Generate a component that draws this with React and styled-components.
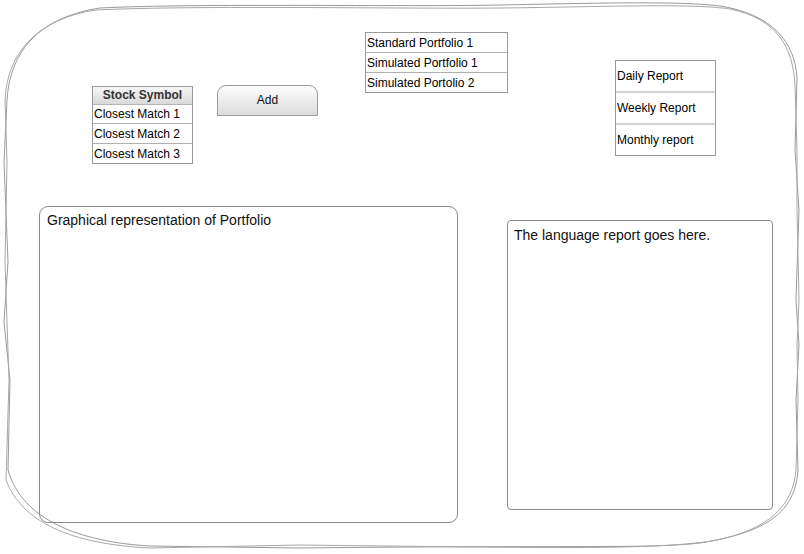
import React from "react";
import styled, { createGlobalStyle } from "styled-components";

const Global = createGlobalStyle`
  html, body { margin: 0; padding: 0; background: #fff; }
  body { font-family: Arial, "Liberation Sans", Helvetica, sans-serif; color: #000; }
`;

const Page = styled.div`
  position: relative;
  width: 804px;
  height: 554px;
  overflow: hidden;
  background: #fff;
  box-sizing: border-box;
  padding-top: 32px;
  display: flex;
  flex-direction: column;
`;

const Frame = styled.svg`
  position: absolute;
  left: 0;
  top: 0;
  width: 804px;
  height: 554px;
  pointer-events: none;
`;

const TopRow = styled.div`
  height: 174px;
  display: flex;
  align-items: flex-start;
`;

const BottomRow = styled.div`
  display: flex;
  align-items: flex-start;
`;

const ListBox = styled.div`
  margin-left: ${(p) => p.$left}px;
  margin-top: ${(p) => p.$top}px;
  width: ${(p) => p.$w}px;
  flex: none;
  border: 1px solid #9a9a9a;
  box-sizing: border-box;
  display: flex;
  flex-direction: column;
  font-size: 12px;
  background: #fff;
`;

const HeaderCell = styled.div`
  height: 17px;
  line-height: 17px;
  text-align: center;
  font-weight: bold;
  color: #333;
  background: linear-gradient(#f6f6f6, #d9d9d9);
  border-bottom: 1px solid #b5b5b5;
`;

const Cell = styled.div`
  height: ${(p) => p.$h}px;
  padding-left: 1px;
  white-space: nowrap;
  box-sizing: border-box;
  display: flex;
  align-items: center;
  border-top: ${(p) => (p.$first ? "none" : p.$thick ? "2px solid #d2d2d2" : "1px solid #b0b0b0")};
`;

const AddButton = styled.button`
  margin: 53px 0 0 24px;
  width: 101px;
  height: 31px;
  flex: none;
  border: 1px solid #9a9a9a;
  border-radius: 9px 9px 0 0;
  background: linear-gradient(#fdfdfd, #dcdcdc);
  font-family: Arial, "Liberation Sans", sans-serif;
  font-size: 12px;
  color: #111;
  padding: 0 0 2px;
  box-sizing: border-box;
`;

const Panel = styled.div`
  margin-left: ${(p) => p.$left}px;
  margin-top: ${(p) => p.$top}px;
  width: ${(p) => p.$w}px;
  height: ${(p) => p.$h}px;
  flex: none;
  border: 1px solid #8c8c8c;
  border-radius: ${(p) => p.$r}px;
  box-sizing: border-box;
  padding: ${(p) => p.$pad};
  font-size: 14px;
  color: #111;
`;

export default function App() {
  return (
    <>
      <Global />
      <Page>
        <Frame viewBox="0 0 804 554">
          <path
            d="M 100 8 C 200 3, 400 7, 500 5 C 600 3, 680 1, 720 6 C 772 14, 795 42, 797 78 L 795 150 L 799 210 L 796 300 L 799 345 L 796 400 L 798 470 C 795 512, 768 532, 700 543 C 650 549, 550 545, 300 548 L 150 546 C 80 542, 22 520, 8 470 L 10 380 L 4 322 L 8 262 L 4 162 L 7 100 C 10 50, 40 17, 100 8 Z"
            fill="none"
            stroke="#9a9a9a"
            strokeWidth="1"
          />
          <path
            d="M 96 10 C 200 5, 400 9, 500 8 C 600 7, 690 3, 730 9 C 778 19, 793 48, 795 85 L 797 150 L 797 210 L 799 300 L 797 345 L 798 400 L 796 470 C 793 505, 770 530, 712 541 C 650 550, 560 548, 300 545 L 150 548 C 70 544, 22 522, 6 480 L 9 380 L 7 322 L 5 262 L 7 162 L 5 100 C 7 55, 35 19, 96 10 Z"
            fill="none"
            stroke="#a8a8a8"
            strokeWidth="1"
          />
        </Frame>
        <TopRow>
          <ListBox $left={92} $top={54} $w={101}>
            <HeaderCell>Stock Symbol</HeaderCell>
            <Cell $h={18} $first>Closest Match 1</Cell>
            <Cell $h={20}>Closest Match 2</Cell>
            <Cell $h={20}>Closest Match 3</Cell>
          </ListBox>
          <AddButton>Add</AddButton>
          <ListBox $left={47} $top={0} $w={143}>
            <Cell $h={19} $first>Standard Portfolio 1</Cell>
            <Cell $h={20}>Simulated Portfolio 1</Cell>
            <Cell $h={20}>Simulated Portolio 2</Cell>
          </ListBox>
          <ListBox $left={107} $top={28} $w={101}>
            <Cell $h={30} $first>Daily Report</Cell>
            <Cell $h={32} $thick>Weekly Report</Cell>
            <Cell $h={32} $thick>Monthly report</Cell>
          </ListBox>
        </TopRow>
        <BottomRow>
          <Panel $left={39} $top={0} $w={419} $h={317} $r={9} $pad="5px 7px">
            Graphical representation of Portfolio
          </Panel>
          <Panel $left={49} $top={14} $w={266} $h={290} $r={4} $pad="6px 6px">
            The language report goes here.
          </Panel>
        </BottomRow>
      </Page>
    </>
  );
}
